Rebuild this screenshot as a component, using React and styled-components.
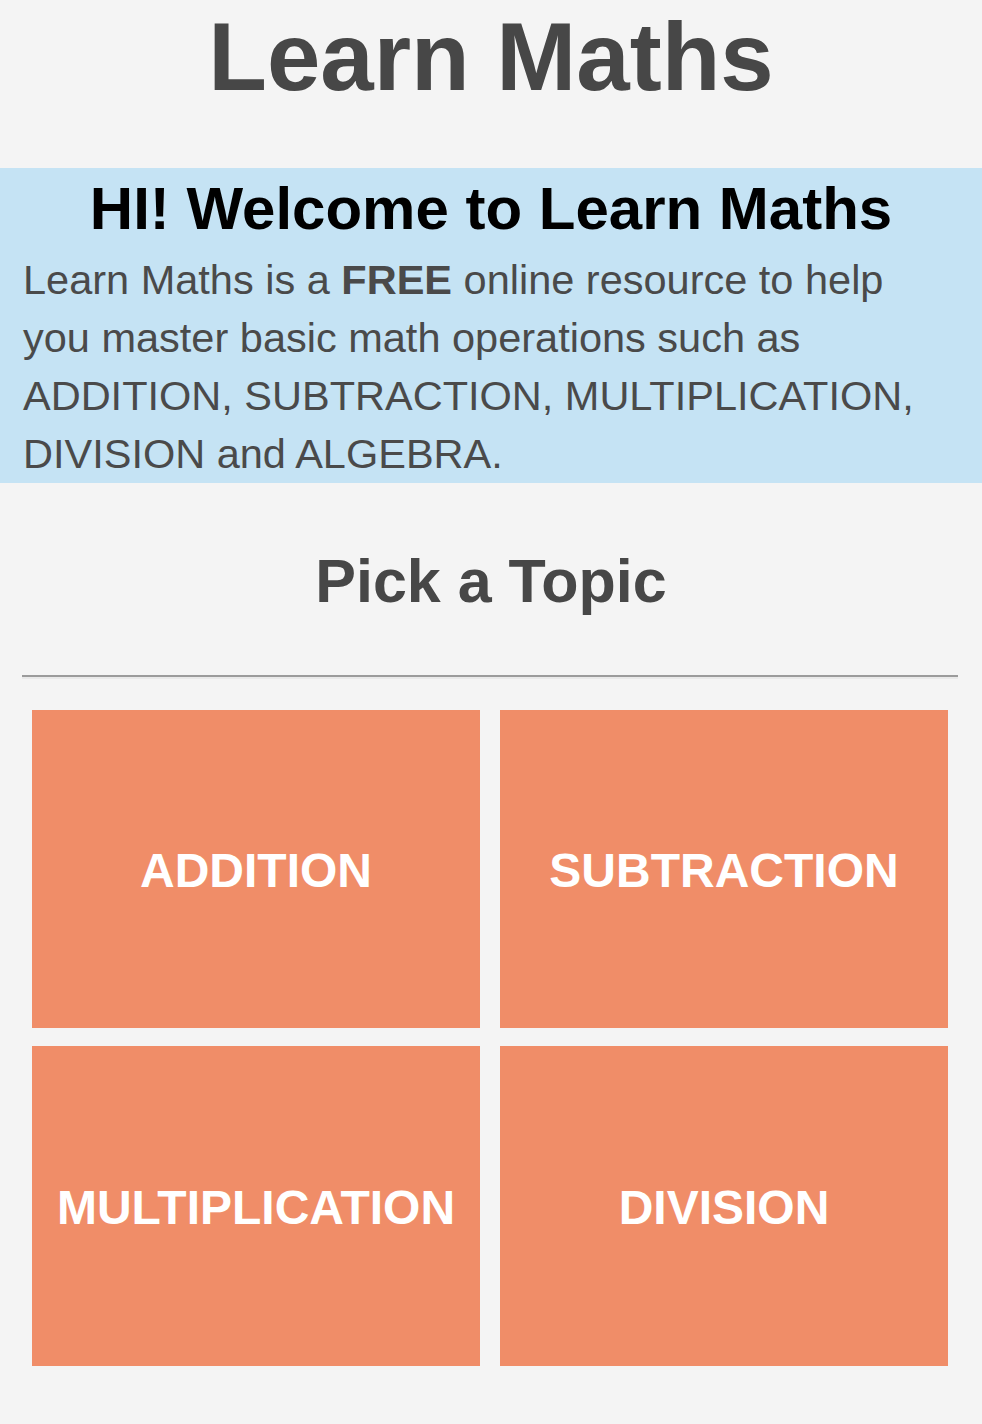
import styled, { createGlobalStyle } from "styled-components";

const GlobalStyle = createGlobalStyle`
  html, body {
    margin: 0;
    background: #f4f4f4;
    font-family: "Liberation Sans", Arial, Helvetica, sans-serif;
  }
`;

const Page = styled.main`
  display: flex;
  flex-direction: column;
  padding-top: 2px;
`;

const Title = styled.h1`
  margin: 0;
  font-size: 96px;
  line-height: 110px;
  font-weight: 700;
  color: #474747;
  text-align: center;
`;

const Intro = styled.section`
  margin-top: 56px;
  background: #c5e3f4;
  padding: 6px 23px 0;
  height: 309px;
`;

const IntroHeading = styled.h2`
  margin: 0;
  font-size: 60px;
  line-height: 70px;
  font-weight: 700;
  color: #000;
  text-align: center;
`;

const IntroText = styled.p`
  margin: 7px 0 0;
  font-size: 41.5px;
  line-height: 58px;
  color: #4a4a4a;

  strong {
    font-weight: 700;
  }
`;

const TopicHeading = styled.h2`
  margin: 62px 0 0;
  font-size: 61px;
  line-height: 72px;
  font-weight: 700;
  color: #474747;
  text-align: center;
`;

const Divider = styled.hr`
  margin: 58px 24px 0 22px;
  height: 0;
  border: none;
  border-top: 2px solid #9b9b9b;
  border-bottom: 2px solid #e9e9e9;
`;

const TopicGrid = styled.div`
  display: grid;
  grid-template-columns: repeat(2, 448px);
  column-gap: 20px;
  row-gap: 18px;
  padding: 31px 34px 0 32px;
`;

const TopicTile = styled.a`
  display: flex;
  align-items: center;
  justify-content: center;
  height: ${(p) => p.$h}px;
  padding-top: 3px;
  box-sizing: border-box;
  background: #f08d68;
  color: #fff;
  font-size: 48px;
  font-weight: 700;
  text-decoration: none;
  cursor: pointer;
`;

const topics = [
  { name: "ADDITION", h: 318 },
  { name: "SUBTRACTION", h: 318 },
  { name: "MULTIPLICATION", h: 320 },
  { name: "DIVISION", h: 320 },
];

export default function App() {
  return (
    <>
      <GlobalStyle />
      <Page>
        <Title>Learn Maths</Title>
        <Intro>
          <IntroHeading>HI! Welcome to Learn Maths</IntroHeading>
          <IntroText>
            Learn Maths is a <strong>FREE</strong> online resource to help you
            master basic math operations such as ADDITION, SUBTRACTION,
            MULTIPLICATION, DIVISION and ALGEBRA.
          </IntroText>
        </Intro>
        <TopicHeading>Pick a Topic</TopicHeading>
        <Divider />
        <TopicGrid>
          {topics.map((t) => (
            <TopicTile key={t.name} $h={t.h}>
              {t.name}
            </TopicTile>
          ))}
        </TopicGrid>
      </Page>
    </>
  );
}
